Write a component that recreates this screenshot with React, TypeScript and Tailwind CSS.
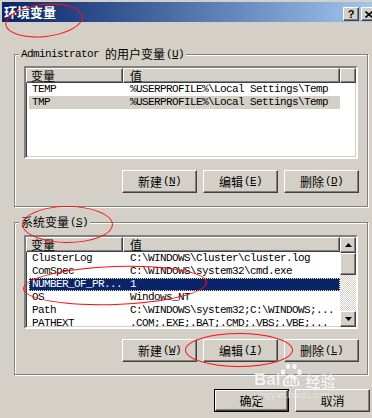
import React from "react";

type Row = [string, string];

const face = "bg-[#d4d0c8]";
const raised =
  "border border-t-white border-l-white border-r-[#404040] border-b-[#404040] shadow-[inset_-1px_-1px_0_#808080]";
const cjk = "font-['Noto_Sans_CJK_SC',sans-serif] text-[12px] leading-none";
const mono =
  "font-['Liberation_Mono',monospace] text-[11px] leading-none tracking-[-0.6px]";

const userRows: Row[] = [
  ["TEMP", "%USERPROFILE%\\Local Settings\\Temp"],
  ["TMP", "%USERPROFILE%\\Local Settings\\Temp"],
];

const sysRows: Row[] = [
  ["ClusterLog", "C:\\WINDOWS\\Cluster\\cluster.log"],
  ["ComSpec", "C:\\WINDOWS\\system32\\cmd.exe"],
  ["NUMBER_OF_PR...", "1"],
  ["OS", "Windows_NT"],
  ["Path", "C:\\WINDOWS\\system32;C:\\WINDOWS;..."],
  ["PATHEXT", ".COM;.EXE;.BAT;.CMD;.VBS;.VBE;..."],
];

// "新建" + "(N)" with the access key underlined
function Label({ text, k }: { text: string; k: string }) {
  return (
    <span className="flex items-center text-black">
      <span className={cjk}>{text}</span>
      <span className={`${mono} ml-[1px]`}>
        (<span className="underline underline-offset-1">{k}</span>)
      </span>
    </span>
  );
}

function Button({ text, k }: { text: string; k: string }) {
  return (
    <div
      className={`w-[75px] h-[23px] ${face} ${raised} flex items-center justify-center`}
    >
      <Label text={text} k={k} />
    </div>
  );
}

function Arrow({ down }: { down?: boolean }) {
  return (
    <svg width="7" height="4" viewBox="0 0 7 4">
      <polygon points={down ? "0,0 7,0 3.5,4" : "3.5,0 7,4 0,4"} fill="#000" />
    </svg>
  );
}

function ListView({
  rows,
  height,
  selected,
  focused,
  scroll,
}: {
  rows: Row[];
  height: number;
  selected: number;
  focused?: boolean;
  scroll?: boolean;
}) {
  return (
    <div
      className="w-[334px] border-2 border-t-[#808080] border-l-[#808080] border-b-white border-r-white bg-white shadow-[inset_1px_1px_0_#404040,inset_-1px_-1px_0_#d4d0c8] overflow-hidden flex"
      style={{ height }}
    >
      <div className="flex flex-col flex-1 min-w-0">
        <div className="flex h-[15px] shrink-0">
          <div className={`w-[97px] ${face} ${raised} flex items-center pl-[4px]`}>
            <span className={`${cjk} text-black`}>变量</span>
          </div>
          <div className={`w-[217px] ${face} ${raised} flex items-center pl-[6px]`}>
            <span className={`${cjk} text-black`}>值</span>
          </div>
          {!scroll && <div className={`flex-1 ${face} ${raised}`} />}
        </div>
        <div className="flex flex-col">
          {rows.map((r, i) => {
            const sel = i === selected;
            const bg = sel
              ? focused
                ? "bg-[#0a246a] text-white outline-1 outline-dotted outline-[#f5e69a] -outline-offset-1"
                : "bg-[#d4d0c8] text-black"
              : "text-black";
            return (
              <div key={i} className="h-[13px] shrink-0 flex">
                <div className={`ml-[3px] w-[311px] flex items-center ${bg}`}>
                  <span className={`${mono} w-[94px] pl-[3px] whitespace-pre`}>
                    {r[0]}
                  </span>
                  <span className={`${mono} pl-[7px] whitespace-pre`}>{r[1]}</span>
                </div>
              </div>
            );
          })}
        </div>
      </div>
      {scroll && (
        <div className="w-[16px] shrink-0 flex flex-col">
          <div className={`h-[16px] shrink-0 ${face} ${raised} flex items-center justify-center`}>
            <Arrow />
          </div>
          <div className={`h-[22px] shrink-0 ${face} ${raised}`} />
          <div className="flex-1 bg-[image:repeating-conic-gradient(#ffffff_0_25%,#d4d0c8_0_50%)] bg-[length:2px_2px]" />
          <div className={`h-[16px] shrink-0 ${face} ${raised} flex items-center justify-center`}>
            <Arrow down />
          </div>
        </div>
      )}
    </div>
  );
}

function GroupBox({
  label,
  className,
  children,
}: {
  label: React.ReactNode;
  className: string;
  children: React.ReactNode;
}) {
  return (
    <div
      className={`relative ml-[12px] w-[354px] h-[153px] border border-[#808080] shadow-[inset_1px_1px_0_#fff,1px_1px_0_#fff] pl-[9px] ${className}`}
    >
      <div className={`absolute left-[4px] top-[-8px] h-[14px] px-[2px] ${face} flex items-center`}>
        {label}
      </div>
      {children}
    </div>
  );
}

function Ellipse({ x, y, w, h, r = 0 }: { x: number; y: number; w: number; h: number; r?: number }) {
  return (
    <div
      className="absolute rounded-[50%] border border-[#ff1010] pointer-events-none"
      style={{ left: x, top: y, width: w, height: h, transform: `rotate(${r}deg)` }}
    />
  );
}

function Watermark() {
  return (
    <div className="absolute left-[254px] top-[363px] w-[92px] h-[40px] pointer-events-none opacity-80">
      <div className="flex items-end">
        <span className="font-['Liberation_Sans',sans-serif] font-bold text-[17px] leading-none text-white [text-shadow:0_0_1px_#9a9a9a]">
          Bai
        </span>
        <div className="relative w-[26px] h-[25px] -ml-[2px]">
          <svg width="26" height="25" viewBox="0 0 26 25" className="absolute left-0 top-0">
            <g fill="#fff" stroke="#a8a8a8" strokeWidth="0.5">
              <ellipse cx="5" cy="9" rx="2.8" ry="3.4" />
              <ellipse cx="10" cy="3.5" rx="2.8" ry="3.3" />
              <ellipse cx="16.5" cy="3.5" rx="2.8" ry="3.3" />
              <ellipse cx="21.5" cy="9" rx="2.8" ry="3.4" />
              <path d="M13 11 C8 11 4 17 4 20.5 C4 24 8 24.5 13 23.5 C18 24.5 22 24 22 20.5 C22 17 18 11 13 11 Z" />
            </g>
          </svg>
          <span className="absolute left-[6px] top-[13px] font-['Liberation_Sans',sans-serif] font-bold text-[11px] leading-none text-[#c8c8c8]">
            du
          </span>
        </div>
        <span className="font-['Noto_Sans_CJK_SC',sans-serif] font-bold text-[15px] leading-none text-white ml-[1px] [text-shadow:0_0_1px_#9a9a9a]">
          经验
        </span>
      </div>
      <div className="font-['Liberation_Sans',sans-serif] text-[9px] leading-none text-white mt-[3px] ml-[3px] [text-shadow:0_0_1px_#a0a0a0]">
        jingyan.baidu.com
      </div>
    </div>
  );
}

export default function App() {
  return (
    <div className={`relative w-[372px] h-[418px] overflow-hidden ${face} pt-[2px] pl-[2px]`}>
      {/* title bar */}
      <div className="w-[377px] h-[20px] bg-linear-to-r from-[#0a246a] to-[#a6caf0] flex items-start pl-[2px] pr-[2px]">
        <span className="font-['Noto_Sans_CJK_SC',sans-serif] font-bold text-[13px] leading-[20px] text-white">
          环境变量
        </span>
        <div className="ml-auto flex gap-[2px] pt-[5px]">
          <div className={`w-[16px] h-[14px] ${face} ${raised} flex items-center justify-center`}>
            <span className="font-['Liberation_Sans',sans-serif] font-bold text-[11px] leading-none text-black">
              ?
            </span>
          </div>
          <div className={`w-[16px] h-[14px] ${face} ${raised} flex items-center justify-center`}>
            <svg width="8" height="7" viewBox="0 0 8 7">
              <path d="M0.5 0.5 L7.5 6.5 M7.5 0.5 L0.5 6.5" stroke="#000" strokeWidth="1.6" />
            </svg>
          </div>
        </div>
      </div>

      <GroupBox
        className="mt-[32px] pt-[11px]"
        label={
          <span className="flex items-center text-black">
            <span className={`${mono} whitespace-pre`}>Administrator </span>
            <span className={cjk}>的用户变量</span>
            <span className={`${mono} ml-[1px]`}>
              (<span className="underline underline-offset-1">U</span>)
            </span>
          </span>
        }
      >
        <ListView rows={userRows} height={93} selected={1} />
        <div className="flex gap-[6px] pl-[98px] mt-[11px]">
          <Button text="新建" k="N" />
          <Button text="编辑" k="E" />
          <Button text="删除" k="D" />
        </div>
      </GroupBox>

      <GroupBox className="mt-[15px] pt-[12px]" label={<Label text="系统变量" k="S" />}>
        <ListView rows={sysRows} height={94} selected={2} focused scroll />
        <div className="flex gap-[6px] pl-[98px] mt-[10px]">
          <Button text="新建" k="W" />
          <Button text="编辑" k="I" />
          <Button text="删除" k="L" />
        </div>
      </GroupBox>

      <div className="flex gap-[6px] ml-[212px] mt-[14px]">
        <div className="w-[75px] h-[23px] border border-black">
          <div className={`w-full h-full ${face} ${raised} flex items-center justify-center`}>
            <span className={`${cjk} text-black`}>确定</span>
          </div>
        </div>
        <div className={`w-[75px] h-[23px] ${face} ${raised} flex items-center justify-center`}>
          <span className={`${cjk} text-black`}>取消</span>
        </div>
      </div>

      <Watermark />

      {/* hand-drawn red marks */}
      <Ellipse x={5} y={4} w={78} h={33} r={-6} />
      <Ellipse x={22} y={206} w={91} h={37} />
      <Ellipse x={23} y={266} w={184} h={39} r={-2} />
      <Ellipse x={185} y={333} w={108} h={34} />
    </div>
  );
}
